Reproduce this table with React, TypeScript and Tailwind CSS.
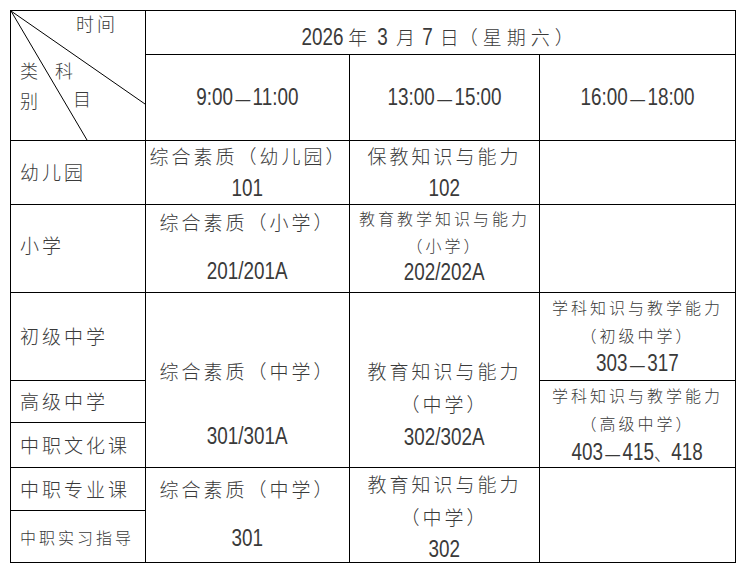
import React from 'react';

// numbers: Arial metrics, squeezed to the narrow look of the original
const NUM = "inline-block font-['Liberation_Sans','Arial',sans-serif] text-[23px] tracking-normal scale-x-[0.82]";
const DASH = 'text-[18px] mx-[3px]';

type Size = 'lg' | 'sm';
const cjkSize: Record<Size, string> = {
  lg: 'text-[19px] tracking-[3px]',
  sm: 'text-[16px] tracking-[3px]',
};

const Txt: React.FC<{ s: string; size?: Size }> = ({ s, size = 'lg' }) => (
  <span className={cjkSize[size]}>{s}</span>
);

const Num: React.FC<{ s: string }> = ({ s }) => {
  const parts = s.split(/(-|、)/).filter(Boolean);
  return (
    <span className={NUM}>
      {parts.map((p, i) => {
        if (p === '-') return <span key={i} className={DASH}>—</span>;
        if (p === '、') return <span key={i} className="text-[21px] font-['Noto_Sans_CJK_SC',sans-serif]">、</span>;
        return <span key={i}>{p}</span>;
      })}
    </span>
  );
};

const Label: React.FC<{ s: string; size?: Size; className?: string }> = ({ s, size = 'lg', className = '' }) => (
  <div className={`bg-white flex items-center pl-[9px] whitespace-nowrap ${className}`}>
    <Txt s={s} size={size} />
  </div>
);

const HeaderCell: React.FC = () => (
  <div className="relative col-start-1 row-start-1 row-span-2 bg-white overflow-hidden">
    <svg className="absolute inset-0" width="134" height="129" viewBox="0 0 134 129">
      <line x1="0" y1="0" x2="134" y2="93" stroke="#000" strokeWidth="1" />
      <line x1="0" y1="0" x2="76" y2="129" stroke="#000" strokeWidth="1" />
    </svg>
    <span className="absolute left-[65px] top-[3px] text-[18px] tracking-[3px] leading-none">时间</span>
    <span className="absolute left-[9px] top-[50px] text-[18px] leading-none">类</span>
    <span className="absolute left-[9px] top-[80px] text-[18px] leading-none">别</span>
    <span className="absolute left-[44px] top-[50px] text-[18px] leading-none">科</span>
    <span className="absolute left-[62px] top-[78px] text-[18px] leading-none">目</span>
  </div>
);

export default function App() {
  return (
    <div className="bg-white w-[742px] h-[567px] pt-[10px] pl-[10px] text-[#3a3a3a] font-light font-['Noto_Sans_CJK_SC','Noto_Sans',sans-serif]">
      <div className="inline-grid grid-cols-[134px_203px_189px_195px] grid-rows-[43px_85px_63px_87px_87px_41px_44px_42px_51px] gap-px p-px bg-black">
        <HeaderCell />

        {/* date */}
        <div className="col-start-2 col-span-3 row-start-1 bg-white flex items-baseline pt-[9px] pl-[155px] whitespace-nowrap text-[19px]">
          <span className={`${NUM} -mx-[4.5px]`}>2026</span>
          <span className="ml-[5px]">年</span>
          <span className={`${NUM} -mx-[1px] ml-[9px]`}>3</span>
          <span className="ml-[8px]">月</span>
          <span className={`${NUM} -mx-[1px] ml-[6px]`}>7</span>
          <span className="ml-[7px]">日</span>
          <span className="tracking-[5px]">（星期六）</span>
        </div>

        {/* times */}
        <div className="col-start-2 row-start-2 bg-white flex items-center justify-center"><Num s="9:00-11:00" /></div>
        <div className="col-start-3 row-start-2 bg-white flex items-center justify-center"><Num s="13:00-15:00" /></div>
        <div className="col-start-4 row-start-2 bg-white flex items-center justify-center"><Num s="16:00-18:00" /></div>

        {/* 幼儿园 */}
        <Label s="幼儿园" className="col-start-1 row-start-3" />
        <div className="col-start-2 row-start-3 bg-white flex flex-col items-center justify-center leading-[31px] whitespace-nowrap">
          <div className="pl-[2px]"><Txt s="综合素质（幼儿园）" /></div>
          <div><Num s="101" /></div>
        </div>
        <div className="col-start-3 row-start-3 bg-white flex flex-col items-center justify-center leading-[31px] whitespace-nowrap">
          <div><Txt s="保教知识与能力" /></div>
          <div><Num s="102" /></div>
        </div>
        <div className="col-start-4 row-start-3 bg-white" />

        {/* 小学 */}
        <Label s="小学" className="col-start-1 row-start-4 pb-[6px]" />
        <div className="col-start-2 row-start-4 bg-white flex flex-col items-center pt-[5px] leading-[24px] whitespace-nowrap">
          <div><Txt s="综合素质（小学）" /></div>
          <div>&nbsp;</div>
          <div><Num s="201/201A" /></div>
        </div>
        <div className="col-start-3 row-start-4 bg-white flex flex-col items-center leading-[27px] whitespace-nowrap">
          <div><Txt s="教育教学知识与能力" size="sm" /></div>
          <div><Txt s="（小学）" size="sm" /></div>
          <div><Num s="202/202A" /></div>
        </div>
        <div className="col-start-4 row-start-4 bg-white" />

        {/* 中学 block */}
        <Label s="初级中学" className="col-start-1 row-start-5" />
        <Label s="高级中学" className="col-start-1 row-start-6" />
        <Label s="中职文化课" className="col-start-1 row-start-7" />
        <div className="col-start-2 row-start-5 row-span-3 bg-white flex flex-col items-center pt-[62px] leading-[32px] whitespace-nowrap">
          <div><Txt s="综合素质（中学）" /></div>
          <div>&nbsp;</div>
          <div><Num s="301/301A" /></div>
        </div>
        <div className="col-start-3 row-start-5 row-span-3 bg-white flex flex-col items-center pt-[62px] leading-[32px] whitespace-nowrap">
          <div><Txt s="教育知识与能力" /></div>
          <div><Txt s="（中学）" /></div>
          <div><Num s="302/302A" /></div>
        </div>
        <div className="col-start-4 row-start-5 bg-white flex flex-col items-center leading-[28px] whitespace-nowrap">
          <div><Txt s="学科知识与教学能力" size="sm" /></div>
          <div><Txt s="（初级中学）" size="sm" /></div>
          <div><Num s="303-317" /></div>
        </div>
        <div className="col-start-4 row-start-6 row-span-2 bg-white flex flex-col items-center leading-[28px] whitespace-nowrap">
          <div><Txt s="学科知识与教学能力" size="sm" /></div>
          <div><Txt s="（高级中学）" size="sm" /></div>
          <div><Num s="403-415、418" /></div>
        </div>

        {/* 中职 */}
        <Label s="中职专业课" className="col-start-1 row-start-8" />
        <Label s="中职实习指导" size="sm" className="col-start-1 row-start-9" />
        <div className="col-start-2 row-start-8 row-span-2 bg-white flex flex-col items-center pt-[9px] leading-[24px] whitespace-nowrap">
          <div><Txt s="综合素质（中学）" /></div>
          <div>&nbsp;</div>
          <div><Num s="301" /></div>
        </div>
        <div className="col-start-3 row-start-8 row-span-2 bg-white flex flex-col items-center leading-[31px] whitespace-nowrap">
          <div><Txt s="教育知识与能力" /></div>
          <div><Txt s="（中学）" /></div>
          <div><Num s="302" /></div>
        </div>
        <div className="col-start-4 row-start-8 row-span-2 bg-white" />
      </div>
    </div>
  );
}
